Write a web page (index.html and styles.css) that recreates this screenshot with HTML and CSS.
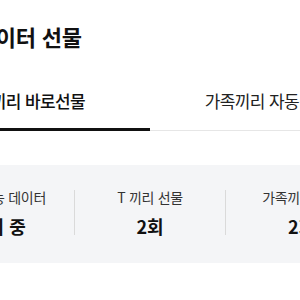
FILE: index.html
```html
<!DOCTYPE html>
<html lang="ko">
<head>
    <meta charset="UTF-8">
    <meta name="viewport" content="width=device-width, initial-scale=1.0">
    <title>T끼리 데이터 선물</title>
    <link rel="stylesheet" href="styles.css">
</head>
<body>
    <div class="page">
        <h1 class="title">T끼리 데이터 선물</h1>

        <div class="tabs">
            <div class="tab active">T끼리 바로선물</div>
            <div class="tab">가족끼리 자동선물</div>
        </div>

        <div class="stats">
            <div class="stat">
                <div class="stat-label">선물 가능 데이터</div>
                <div class="stat-value">조회 중</div>
            </div>
            <div class="divider"></div>
            <div class="stat">
                <div class="stat-label">T 끼리 선물</div>
                <div class="stat-value">2회</div>
            </div>
            <div class="divider"></div>
            <div class="stat">
                <div class="stat-label">가족끼리 선물</div>
                <div class="stat-value">2회</div>
            </div>
        </div>
    </div>
</body>
</html>
```

FILE: styles.css
```css
body {
    margin: 0;
    padding: 0;
    background-color: #FFFFFF;
    font-family: "Noto Sans CJK KR", "Noto Sans", sans-serif;
    color: #111111;
    overflow: hidden;
}
.page {
    width: 468px;
    margin-left: -84px;
}
.title {
    margin: 21px 0 0 0;
    padding-left: 0;
    font-size: 22px;
    line-height: 30px;
    font-weight: 700;
    letter-spacing: -0.2px;
    color: #111111;
}
.tabs {
    display: flex;
    margin-top: 24px;
    border-bottom: 1px solid #E6E6E6;
}
.tab {
    flex: 1;
    text-align: center;
    font-size: 17px;
    line-height: 24px;
    padding: 14px 0 15px;
    border-bottom: 3px solid transparent;
    margin-bottom: -1px;
    color: #222222;
    letter-spacing: -0.6px;
}
.tab.active {
    border-bottom-color: #111111;
    font-weight: 500;
    color: #111111;
}
.stats {
    display: flex;
    align-items: center;
    height: 98px;
    margin-top: 34px;
    padding: 0 7px 3px;
    box-sizing: border-box;
    background-color: #F4F5F7;
}
.stat {
    flex: 1;
    text-align: center;
}
.stat-label {
    font-size: 14px;
    line-height: 20px;
    color: #333333;
    letter-spacing: -0.3px;
}
.stat-value {
    margin-top: 6px;
    font-size: 18px;
    line-height: 26px;
    font-weight: 700;
    color: #111111;
}
.divider {
    width: 1px;
    height: 45px;
    background-color: #DADADA;
}
```
